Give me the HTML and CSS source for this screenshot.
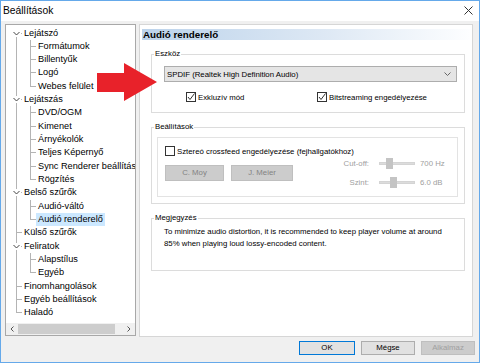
FILE: index.html
```html
<!DOCTYPE html>
<html lang="hu">
<head>
    <meta charset="UTF-8">
    <title>Beállítások</title>
    <link rel="stylesheet" href="styles.css">
</head>
<body>
    <div class="window">
        <div class="titlebar">
            <span class="title">Beállítások</span>
            <svg class="close" width="9" height="9" viewBox="0 0 9 9">
                <path d="M0.5 0.5 L8.5 8.5 M8.5 0.5 L0.5 8.5" stroke="#333" stroke-width="1" fill="none"/>
            </svg>
        </div>

        <div class="main">
            <div class="tree-panel">
                <div class="tree-scroll">
                    <ul class="tree">
                        <li>
                            <div class="row"><span class="expander"><svg width="7" height="5" viewBox="0 0 7 5"><polyline points="0.5,1 3.5,4 6.5,1" fill="none" stroke="#444"/></svg></span><span class="label">Lejátszó</span></div>
                            <ul class="children">
                                <li><div class="row"><span class="label">Formátumok</span></div></li>
                                <li><div class="row"><span class="label">Billentyűk</span></div></li>
                                <li><div class="row"><span class="label">Logó</span></div></li>
                                <li><div class="row"><span class="label">Webes felület</span></div></li>
                            </ul>
                        </li>
                        <li>
                            <div class="row"><span class="expander"><svg width="7" height="5" viewBox="0 0 7 5"><polyline points="0.5,1 3.5,4 6.5,1" fill="none" stroke="#444"/></svg></span><span class="label">Lejátszás</span></div>
                            <ul class="children">
                                <li><div class="row"><span class="label">DVD/OGM</span></div></li>
                                <li><div class="row"><span class="label">Kimenet</span></div></li>
                                <li><div class="row"><span class="label">Árnyékolók</span></div></li>
                                <li><div class="row"><span class="label">Teljes Képernyő</span></div></li>
                                <li><div class="row"><span class="label">Sync Renderer beállításo</span></div></li>
                                <li><div class="row"><span class="label">Rögzítés</span></div></li>
                            </ul>
                        </li>
                        <li>
                            <div class="row"><span class="expander"><svg width="7" height="5" viewBox="0 0 7 5"><polyline points="0.5,1 3.5,4 6.5,1" fill="none" stroke="#444"/></svg></span><span class="label">Belső szűrők</span></div>
                            <ul class="children">
                                <li><div class="row"><span class="label">Audió-váltó</span></div></li>
                                <li><div class="row"><span class="label selected">Audió renderelő</span></div></li>
                            </ul>
                        </li>
                        <li><div class="row"><span class="label">Külső szűrők</span></div></li>
                        <li>
                            <div class="row"><span class="expander"><svg width="7" height="5" viewBox="0 0 7 5"><polyline points="0.5,1 3.5,4 6.5,1" fill="none" stroke="#444"/></svg></span><span class="label">Feliratok</span></div>
                            <ul class="children">
                                <li><div class="row"><span class="label">Alapstílus</span></div></li>
                                <li><div class="row"><span class="label">Egyéb</span></div></li>
                            </ul>
                        </li>
                        <li><div class="row"><span class="label">Finomhangolások</span></div></li>
                        <li><div class="row"><span class="label">Egyéb beállítások</span></div></li>
                        <li><div class="row"><span class="label">Haladó</span></div></li>
                    </ul>
                </div>
                <div class="hscroll">
                    <svg class="sb-arrow" width="4" height="6" viewBox="0 0 4 6"><polyline points="3.5,0.5 1,3 3.5,5.5" fill="none" stroke="#555"/></svg>
                    <div class="sb-track"><div class="sb-thumb"></div></div>
                    <svg class="sb-arrow" width="4" height="6" viewBox="0 0 4 6"><polyline points="0.5,0.5 3,3 0.5,5.5" fill="none" stroke="#555"/></svg>
                </div>
            </div>

            <div class="page">
                <div class="page-title">Audió renderelő</div>

                <fieldset class="group">
                    <legend>Eszköz</legend>
                    <div class="combo">
                        <span>SPDIF (Realtek High Definition Audio)</span>
                        <svg width="7" height="4" viewBox="0 0 7 4"><polyline points="0.5,0.5 3.5,3.5 6.5,0.5" fill="none" stroke="#666"/></svg>
                    </div>
                    <div class="checks">
                        <label class="check">
                            <svg width="10" height="10" viewBox="0 0 10 10"><rect x="0.5" y="0.5" width="9" height="9" fill="#fff" stroke="#333"/><polyline points="2,5 4,7.5 8.5,1.5" fill="none" stroke="#333"/></svg>
                            Exkluzív mód
                        </label>
                        <label class="check">
                            <svg width="10" height="10" viewBox="0 0 10 10"><rect x="0.5" y="0.5" width="9" height="9" fill="#fff" stroke="#333"/><polyline points="2,5 4,7.5 8.5,1.5" fill="none" stroke="#333"/></svg>
                            Bitstreaming engedélyezése
                        </label>
                    </div>
                </fieldset>

                <fieldset class="group settings">
                    <legend>Beállítások</legend>
                    <div class="inner-frame">
                        <label class="check">
                            <svg width="10" height="10" viewBox="0 0 10 10"><rect x="0.5" y="0.5" width="9" height="9" fill="#fff" stroke="#333"/></svg>
                            Sztereó crossfeed engedélyezése (fejhallgatókhoz)
                        </label>
                        <div class="crossfeed">
                            <div class="btn-disabled moy">C. Moy</div>
                            <div class="btn-disabled meier">J. Meier</div>
                            <div class="sliders">
                                <div class="slider-row">
                                    <span class="slider-label">Cut-off:</span>
                                    <div class="track"><div class="thumb" style="left: 6px"></div></div>
                                    <span class="slider-value">700 Hz</span>
                                </div>
                                <div class="slider-row">
                                    <span class="slider-label">Szint:</span>
                                    <div class="track"><div class="thumb" style="left: 10px"></div></div>
                                    <span class="slider-value">6.0 dB</span>
                                </div>
                            </div>
                        </div>
                    </div>
                </fieldset>

                <fieldset class="group note">
                    <legend>Megjegyzés</legend>
                    <p>To minimize audio distortion, it is recommended to keep player volume at around<br>85% when playing loud lossy-encoded content.</p>
                </fieldset>
            </div>
        </div>

        <div class="buttons">
            <div class="dlg-btn ok">OK</div>
            <div class="dlg-btn">Mégse</div>
            <div class="dlg-btn disabled">Alkalmaz</div>
        </div>

        <svg class="callout" width="62" height="42" viewBox="0 0 62 42">
            <polygon points="0,11 27,11 27,1 60,20 27,39 27,30 0,30" fill="#e8222a"/>
        </svg>
    </div>
</body>
</html>
```

FILE: styles.css
```css
* {
    box-sizing: border-box;
}

body {
    margin: 0;
    font-family: "Liberation Sans", Arial, sans-serif;
    font-size: 7.8px;
    color: #000;
    background: #fff;
}

.window {
    position: relative;
    width: 480px;
    height: 363px;
    border: 1px solid #65a9ea;
    background: #f0f0f0;
    display: flex;
    flex-direction: column;
}

.titlebar {
    height: 20px;
    background: #fff;
    display: flex;
    align-items: center;
    justify-content: space-between;
    padding: 0 6px 2px 2px;
}

.title {
    font-size: 10.3px;
}

.main {
    display: flex;
    gap: 3px;
    height: 316px;
    padding: 3px 6px 0 4px;
}

/* tree */

.tree-panel {
    width: 131px;
    height: 312px;
    border: 1px solid #a8a8a8;
    background: #fff;
    display: flex;
    flex-direction: column;
    font-size: 9.2px;
}

.tree-scroll {
    flex: 1;
    overflow: hidden;
}

.tree,
.children {
    list-style: none;
    margin: 0;
    padding: 0;
}

.tree {
    padding-top: 1.5px;
}

.tree li {
    position: relative;
}

.row {
    position: relative;
    height: 13.33px;
    line-height: 13.33px;
    white-space: nowrap;
}

.tree > li > .row { padding-left: 16px; }
.children > li > .row { padding-left: 30px; }

.label {
    display: inline-block;
    height: 13.33px;
    padding: 0 2px;
}

.label.selected {
    background: #cce8ff;
}

.tree > li::before,
.children > li::before {
    content: "";
    position: absolute;
    top: 0;
    bottom: 0;
    border-left: 1px solid #b4b4b4;
}

.tree > li::before { left: 10px; }
.children > li::before { left: 24px; }

.tree > li:first-child::before { top: 6px; }

.tree > li:last-child::before,
.children > li:last-child::before {
    bottom: auto;
    height: 7px;
}

.tree > li > .row::before,
.children > li > .row::before {
    content: "";
    position: absolute;
    top: 6px;
    width: 6px;
    border-top: 1px solid #b4b4b4;
}

.tree > li > .row::before { left: 10px; }
.children > li > .row::before { left: 24px; }

.expander {
    position: absolute;
    left: 5px;
    top: 3px;
    width: 10px;
    height: 7px;
    background: #fff;
    display: flex;
    align-items: center;
    justify-content: center;
    z-index: 1;
}

.hscroll {
    height: 12px;
    background: #f0f0f0;
    display: flex;
    align-items: center;
    padding: 0 4px 0 4px;
    gap: 4px;
}

.sb-track {
    flex: 1;
    height: 10px;
    padding-right: 8px;
}

.sb-thumb {
    height: 100%;
    background: #cdcdcd;
}

/* page */

.page {
    flex: 0 0 334px;
    height: 313px;
    background: #fff;
    border: 1px solid #d6d6d6;
    padding: 4px 7px 0 11px;
}

.page-title {
    height: 11px;
    line-height: 11px;
    margin: 0 -5px 0 -9px;
    padding-left: 1px;
    font-size: 9.8px;
    font-weight: bold;
    background: linear-gradient(90deg, #bcd3eb 0%, #dde8f4 55%, #fdfeff 100%);
}

.group {
    border: 1px solid #dcdcdc;
    margin: 9px 0 0;
    padding: 0;
    min-width: 0;
}

.group legend {
    margin-left: 2px;
    padding: 0 1px;
    line-height: 10px;
}

.combo {
    height: 16px;
    margin: 7px 7px 0 12px;
    border: 1px solid #adadad;
    background: #e5e5e5;
    display: flex;
    align-items: center;
    justify-content: space-between;
    padding: 0 5px 0 2px;
}

.checks {
    display: grid;
    grid-template-columns: 131px auto;
    height: 10px;
    margin: 10px 0 10px 34px;
}

.check {
    display: flex;
    align-items: center;
    gap: 2px;
    height: 10px;
    white-space: nowrap;
}

.check svg {
    flex: none;
}

.inner-frame {
    margin: 5px 6px 6px 5px;
    border: 1px solid #e3e3e3;
    padding: 8px 7px 8px 7px;
}

.crossfeed {
    display: flex;
    align-items: center;
    height: 31px;
    margin-top: 1px;
}

.btn-disabled {
    height: 16px;
    line-height: 14px;
    text-align: center;
    border: 1px solid #bfbfbf;
    background: #cccccc;
    color: #838383;
}

.moy { width: 59px; }
.meier { width: 62px; margin-left: 7px; }

.sliders {
    margin-left: 44px;
    display: flex;
    flex-direction: column;
    gap: 7px;
    color: #a0a0a0;
}

.slider-row {
    display: flex;
    align-items: center;
    height: 12px;
}

.slider-label {
    width: 32px;
    text-align: right;
}

.track {
    position: relative;
    width: 36px;
    height: 3px;
    margin: 0 5px 0 10px;
    background: #dcdcdc;
    border: 1px solid #d4d4d4;
}

.thumb {
    position: absolute;
    top: -5px;
    width: 7px;
    height: 11px;
    background: #c4c4c4;
}

.note p {
    margin: 3px 0 20px 12px;
    line-height: 12px;
    white-space: nowrap;
}

/* dialog buttons */

.buttons {
    display: flex;
    justify-content: flex-end;
    gap: 6px;
    padding: 4px 4px 0 0;
}

.dlg-btn {
    width: 54px;
    height: 14px;
    line-height: 12px;
    text-align: center;
    border: 1px solid #adadad;
    background: #e1e1e1;
}

.dlg-btn.ok {
    width: 56px;
    border-color: #0078d7;
}

.dlg-btn.disabled {
    border-color: #bfbfbf;
    background: #cccccc;
    color: #a0a0a0;
}

.callout {
    position: absolute;
    left: 96px;
    top: 61px;
}
```
